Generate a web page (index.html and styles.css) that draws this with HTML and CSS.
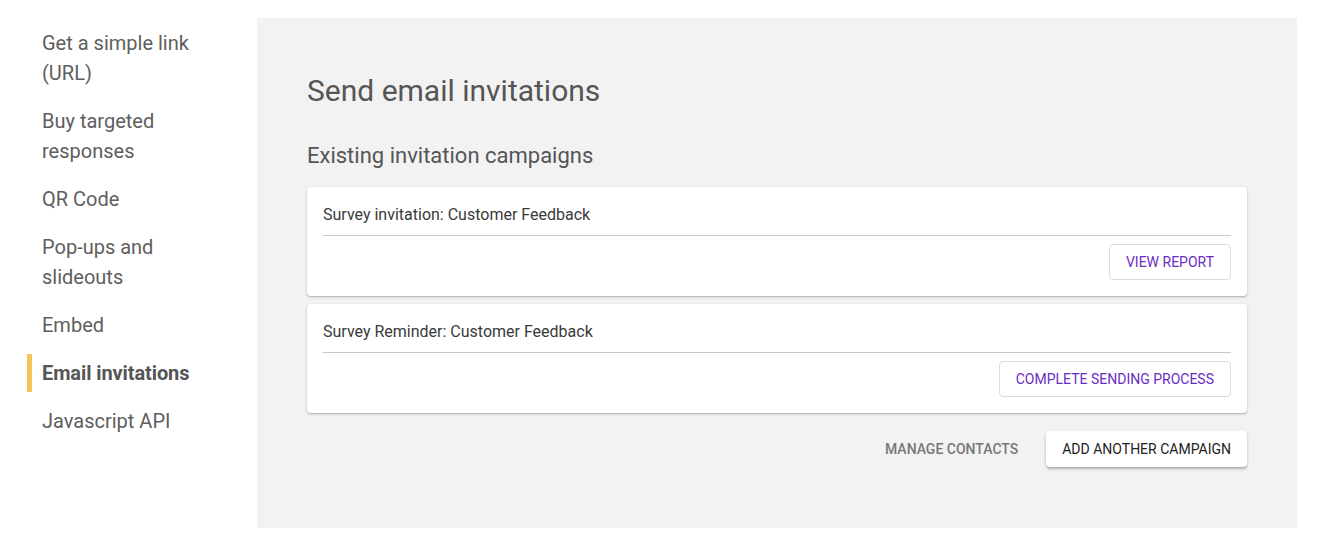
FILE: index.html
```html
<!DOCTYPE html>
<html lang="en">
<head>
<meta charset="utf-8">
<title>Send email invitations</title>
<link rel="stylesheet" href="styles.css">
</head>
<body>
<div class="page">
  <nav class="sidebar">
    <a class="nav-item">Get a simple link (URL)</a>
    <a class="nav-item">Buy targeted responses</a>
    <a class="nav-item">QR Code</a>
    <a class="nav-item">Pop-ups and slideouts</a>
    <a class="nav-item">Embed</a>
    <a class="nav-item active">Email invitations</a>
    <a class="nav-item">Javascript API</a>
  </nav>
  <main class="panel">
    <h1 class="title">Send email invitations</h1>
    <h2 class="subtitle">Existing invitation campaigns</h2>
    <div class="card">
      <div class="card-title">Survey invitation: Customer Feedback</div>
      <div class="card-actions">
        <button class="btn btn-outline">View report</button>
      </div>
    </div>
    <div class="card">
      <div class="card-title">Survey Reminder: Customer Feedback</div>
      <div class="card-actions">
        <button class="btn btn-outline">Complete sending process</button>
      </div>
    </div>
    <div class="footer-actions">
      <button class="btn btn-text">Manage contacts</button>
      <button class="btn btn-raised">Add another campaign</button>
    </div>
  </main>
</div>
</body>
</html>
```

FILE: styles.css
```css
* { box-sizing: border-box; }
html, body {
  margin: 0;
  padding: 0;
  background: #fff;
  font-family: Roboto, "Liberation Sans", Arial, sans-serif;
}
.page {
  display: flex;
  align-items: flex-start;
  padding: 18px 22px 22px 0;
}
.sidebar {
  width: 257px;
  flex: 0 0 257px;
  padding: 6px 40px 0 27px;
  display: flex;
  flex-direction: column;
  gap: 10px;
}
.nav-item {
  display: block;
  font-size: 20px;
  line-height: 30px;
  color: #5e5e5e;
  padding: 4px 0 4px 10px;
  border-left: 5px solid transparent;
  cursor: pointer;
}
.nav-item.active {
  border-left-color: #f6c35a;
  font-weight: 700;
  color: #555;
  letter-spacing: -0.1px;
}
.panel {
  flex: 1;
  background: #f2f2f2;
  padding: 55px 50px 61px 50px;
}
.title {
  margin: 0;
  font-size: 30px;
  line-height: 36px;
  font-weight: 400;
  color: #555;
}
.subtitle {
  margin: 33px 0 17px;
  font-size: 22px;
  line-height: 28px;
  font-weight: 400;
  color: #555;
}
.card {
  background: #fff;
  border-radius: 4px;
  box-shadow: 0 1px 3px rgba(0,0,0,0.22), 0 1px 1px rgba(0,0,0,0.10);
  padding: 17px 16px 16px 16px;
  margin-bottom: 8px;
}
.card-title {
  font-size: 16px;
  line-height: 22px;
  color: #3a3a3a;
  padding-bottom: 9px;
  border-bottom: 1px solid #c8c8c8;
}
.card-actions {
  display: flex;
  justify-content: flex-end;
  padding-top: 8px;
}
.btn {
  font-family: inherit;
  font-size: 14px;
  font-weight: 400;
  text-transform: uppercase;
  height: 36px;
  padding: 0 16px;
  border-radius: 4px;
  cursor: pointer;
  letter-spacing: 0;
}
.btn-outline {
  background: #fff;
  border: 1px solid #dcdcdc;
  color: #6a2dc2;
}
.footer-actions {
  display: flex;
  justify-content: flex-end;
  align-items: center;
  gap: 12px;
  margin-top: 18px;
}
.btn-text {
  background: transparent;
  border: none;
  color: #777;
  font-weight: 500;
}
.btn-raised {
  background: #fff;
  border: none;
  color: #222;
  box-shadow: 0 2px 3px rgba(0,0,0,0.25), 0 1px 1px rgba(0,0,0,0.08);
}
```
